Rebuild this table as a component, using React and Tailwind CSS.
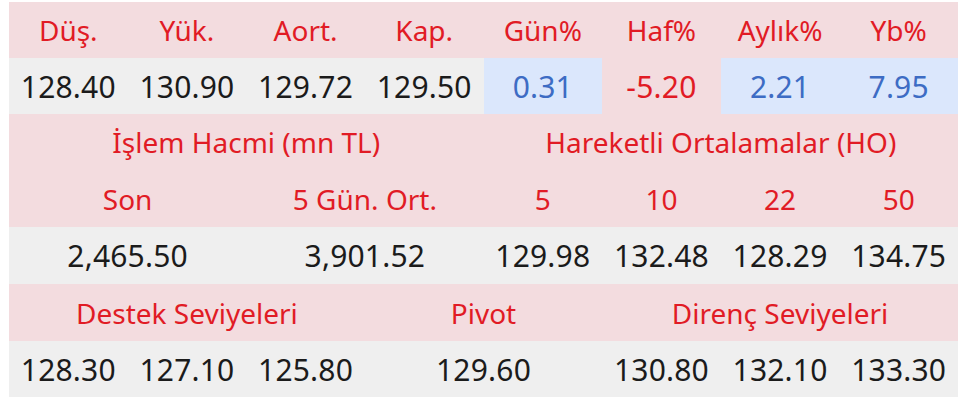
const pink = "bg-[#f3dcdf]";
const grey = "bg-[#efefef]";
const blue = "bg-[#dbe7fc]";

function Label({ children, span = "col-span-1", className = "" }) {
  return (
    <div
      className={`${span} flex items-center justify-center text-[28px] text-[#e11b25] ${className}`}
    >
      {children}
    </div>
  );
}

function Val({ children, span = "col-span-1", className = "text-[#1b1b1b]" }) {
  return (
    <div
      className={`${span} flex items-center justify-center text-[30px] tracking-[0.2px] ${className}`}
    >
      {children}
    </div>
  );
}

export default function App() {
  return (
    <div
      className="w-[960px] h-[400px] bg-white pt-[2px] pl-[9px]"
      style={{ fontFamily: '"Noto Sans", "Open Sans", sans-serif' }}
    >
      <div className="w-[949px]">
        <div className={`grid grid-cols-8 h-[56px] ${pink}`}>
          <Label>Düş.</Label>
          <Label>Yük.</Label>
          <Label>Aort.</Label>
          <Label>Kap.</Label>
          <Label>Gün%</Label>
          <Label>Haf%</Label>
          <Label>Aylık%</Label>
          <Label>Yb%</Label>
        </div>

        <div className="grid grid-cols-8 h-[56px]">
          <Val className={`text-[#1b1b1b] ${grey}`}>128.40</Val>
          <Val className={`text-[#1b1b1b] ${grey}`}>130.90</Val>
          <Val className={`text-[#1b1b1b] ${grey}`}>129.72</Val>
          <Val className={`text-[#1b1b1b] ${grey}`}>129.50</Val>
          <Val className={`text-[#3d6cc4] ${blue}`}>0.31</Val>
          <Val className={`text-[#e11b25] ${pink}`}>-5.20</Val>
          <Val className={`text-[#3d6cc4] ${blue}`}>2.21</Val>
          <Val className={`text-[#3d6cc4] ${blue}`}>7.95</Val>
        </div>

        <div className={`grid grid-cols-8 h-[56px] ${pink}`}>
          <Label span="col-span-4">İşlem Hacmi (mn TL)</Label>
          <Label span="col-span-4">Hareketli Ortalamalar (HO)</Label>
        </div>
        <div className={`grid grid-cols-8 h-[57px] ${pink}`}>
          <Label span="col-span-2">Son</Label>
          <Label span="col-span-2">5 Gün. Ort.</Label>
          <Label>5</Label>
          <Label>10</Label>
          <Label>22</Label>
          <Label>50</Label>
        </div>
        <div className={`grid grid-cols-8 h-[57px] ${grey}`}>
          <Val span="col-span-2">2,465.50</Val>
          <Val span="col-span-2">3,901.52</Val>
          <Val>129.98</Val>
          <Val>132.48</Val>
          <Val>128.29</Val>
          <Val>134.75</Val>
        </div>

        <div className={`grid grid-cols-8 h-[57px] ${pink}`}>
          <Label span="col-span-3">Destek Seviyeleri</Label>
          <Label span="col-span-2">Pivot</Label>
          <Label span="col-span-3">Direnç Seviyeleri</Label>
        </div>
        <div className={`grid grid-cols-8 h-[56px] ${grey}`}>
          <Val>128.30</Val>
          <Val>127.10</Val>
          <Val>125.80</Val>
          <Val span="col-span-2">129.60</Val>
          <Val>130.80</Val>
          <Val>132.10</Val>
          <Val>133.30</Val>
        </div>
      </div>
    </div>
  );
}
